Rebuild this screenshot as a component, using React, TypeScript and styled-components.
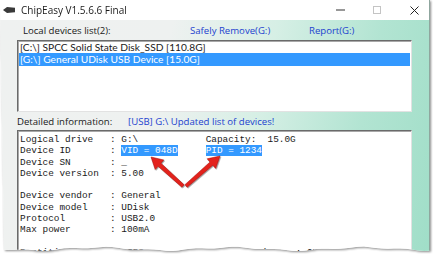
import React from "react";
import styled, { createGlobalStyle } from "styled-components";

const uiFont = `"Open Sans", "Noto Sans", sans-serif`;
const listFont = `Lato, "Liberation Sans", sans-serif`;
const monoFont = `"Liberation Mono", "Courier New", monospace`;

const GlobalStyle = createGlobalStyle`
  html, body {
    margin: 0;
    padding: 0;
    background: #ffffff;
  }
  body {
    width: 434px;
    height: 257px;
    overflow: hidden;
  }
`;

// torn paper bottom edge of the screenshot
const tornEdge = (() => {
  const pts: string[] = ["0 0", "100% 0"];
  for (let x = 430; x >= 0; x -= 6) {
    const y = 248.8 + Math.sin(x / 21) * 1.5 + Math.sin(x / 6.7 + 1) * 0.7;
    pts.push(`${x}px ${y.toFixed(1)}px`);
  }
  return `polygon(${pts.join(", ")})`;
})();

const Page = styled.div`
  position: relative;
  width: 434px;
  height: 257px;
  overflow: hidden;
  background: #ffffff;
`;

const Shadow = styled.div`
  width: 431px;
  filter: drop-shadow(1px 1.5px 1.2px rgba(0, 0, 0, 0.45));
`;

const Window = styled.div`
  width: 430px;
  height: 256px;
  box-sizing: border-box;
  display: flex;
  flex-direction: column;
  border-right: 1px solid #8fa69e;
  clip-path: ${tornEdge};
  background: #ffffff;
`;

const TitleBar = styled.div`
  height: 20px;
  flex: none;
  display: flex;
  align-items: center;
  padding-left: 3px;
  background: #ffffff;
`;

const Title = styled.span`
  margin-left: 6px;
  font-family: ${uiFont};
  font-size: 10px;
  color: #1a1a1a;
`;

const Controls = styled.div`
  margin-left: auto;
  display: flex;
  height: 20px;
`;

const Control = styled.div<{ $w: number }>`
  width: ${(p) => p.$w}px;
  display: flex;
  align-items: center;
  justify-content: center;
`;

const Client = styled.div`
  flex: 1;
  display: flex;
  flex-direction: column;
  padding: 0 17px;
  background: linear-gradient(
    102deg,
    #eff1f0 0%,
    #eef1f0 36%,
    #d6efe5 58%,
    #b2e4d2 80%,
    #a0dec8 100%
  );
`;

const HeaderRow = styled.div<{ $h: number; $cols: string }>`
  height: ${(p) => p.$h}px;
  flex: none;
  display: grid;
  grid-template-columns: ${(p) => p.$cols};
  align-items: center;
  font-family: ${uiFont};
  font-size: 9.6px;
  white-space: nowrap;
`;

const Label = styled.span<{ $indent?: number }>`
  padding-left: ${(p) => p.$indent ?? 0}px;
  color: #1a1a1a;
`;

const LinkText = styled.span`
  color: #1d3fcf;
`;

const Box = styled.div`
  box-sizing: border-box;
  background: #ffffff;
  border-top: 1px solid #6a6a6a;
  border-left: 1px solid #6a6a6a;
  border-right: 1px solid #e2e2e2;
  border-bottom: 1px solid #e2e2e2;
  box-shadow: inset 1px 1px 0 #a8a8a8;
`;

const ListBox = styled(Box)`
  height: 72px;
  flex: none;
  padding: 0 1px 0 1px;
`;

const ListRow = styled.div<{ $selected?: boolean }>`
  height: 12.3px;
  line-height: 12.3px;
  padding-left: 1px;
  font-family: ${listFont};
  font-size: 10.2px;
  white-space: nowrap;
  overflow: hidden;
  color: ${(p) => (p.$selected ? "#ffffff" : "#1a1a1a")};
  background: ${(p) => (p.$selected ? "#3399ff" : "transparent")};
`;

const DetailBox = styled(Box)`
  flex: 1;
  padding: 3px 0 0 2px;
  font-family: ${monoFont};
  font-size: 9.4px;
  line-height: 11.3px;
  color: #1a1a1a;
  white-space: pre;
`;

const Line = styled.div`
  height: 11.3px;
`;

const Mark = styled.span`
  background: #3399ff;
  color: #ffffff;
`;

const Arrows = styled.svg`
  position: absolute;
  left: 0;
  top: 0;
  pointer-events: none;
`;

const arrowPoints = (x1: number, y1: number, x2: number, y2: number) => {
  const shaft = 2.1;
  const headW = 6.4;
  const headL = 11.5;
  const dx = x2 - x1;
  const dy = y2 - y1;
  const len = Math.hypot(dx, dy);
  const ux = dx / len;
  const uy = dy / len;
  const px = -uy;
  const py = ux;
  const bx = x2 - ux * headL;
  const by = y2 - uy * headL;
  const p = (x: number, y: number) => `${x.toFixed(1)},${y.toFixed(1)}`;
  return [
    p(x1 + px * shaft * 0.8, y1 + py * shaft * 0.8),
    p(bx + px * shaft, by + py * shaft),
    p(bx + px * headW, by + py * headW),
    p(x2, y2),
    p(bx - px * headW, by - py * headW),
    p(bx - px * shaft, by - py * shaft),
    p(x1 - px * shaft * 0.8, y1 - py * shaft * 0.8),
  ].join(" ");
};

const AppIcon = () => (
  <svg width="12" height="8" viewBox="0 0 12 8">
    <path d="M0 4 L4 1 L12 1.8 L12 6.2 L4 7 Z" fill="#3a3a3a" />
  </svg>
);

const details: React.ReactNode[] = [
  <>{"Logical drive   : G:\\            Capacity:  15.0G"}</>,
  <>
    {"Device ID       : "}
    <Mark>VID = 048D</Mark>
    {"     "}
    <Mark>PID = 1234</Mark>
  </>,
  <>{"Device SN       : _"}</>,
  <>{"Device version  : 5.00"}</>,
  <>{""}</>,
  <>{"Device vendor   : General"}</>,
  <>{"Device model    : UDisk"}</>,
  <>{"Protocol        : USB2.0"}</>,
  <>{"Max power       : 100mA"}</>,
  <>{""}</>,
  <>{"Partition type  : NTFS           Device active   : OK"}</>,
];

export default function App() {
  return (
    <Page>
      <GlobalStyle />
      <Shadow>
        <Window>
          <TitleBar>
            <AppIcon />
            <Title>ChipEasy V1.5.6.6 Final</Title>
            <Controls>
              <Control $w={28}>
                <svg width="9" height="2" viewBox="0 0 9 2">
                  <rect width="9" height="1" y="0.5" fill="#333" />
                </svg>
              </Control>
              <Control $w={45}>
                <svg width="8" height="8" viewBox="0 0 8 8">
                  <rect x="0.5" y="0.5" width="7" height="7" fill="none" stroke="#c4c4c4" />
                </svg>
              </Control>
              <Control $w={30}>
                <svg width="9" height="9" viewBox="0 0 9 9">
                  <path d="M0.5 0.5 L8.5 8.5 M8.5 0.5 L0.5 8.5" stroke="#222" strokeWidth="1" />
                </svg>
              </Control>
            </Controls>
          </TitleBar>
          <Client>
            <HeaderRow $h={20} $cols="173px 119px auto">
              <Label $indent={6}>Local devices list(2):</Label>
              <LinkText>Safely Remove(G:)</LinkText>
              <LinkText>Report(G:)</LinkText>
            </HeaderRow>
            <ListBox>
              <ListRow>[C:\] SPCC Solid State Disk_SSD [110.8G]</ListRow>
              <ListRow $selected>[G:\] General UDisk USB Device [15.0G]</ListRow>
            </ListBox>
            <HeaderRow $h={18} $cols="111px auto">
              <Label>Detailed information:</Label>
              <LinkText>[USB] G:\ Updated list of devices!</LinkText>
            </HeaderRow>
            <DetailBox>
              {details.map((d, i) => (
                <Line key={i}>{d}</Line>
              ))}
            </DetailBox>
          </Client>
        </Window>
      </Shadow>
      <Arrows width="434" height="257" viewBox="0 0 434 257">
        <defs>
          <filter id="arrowShadow" x="-20%" y="-20%" width="140%" height="140%">
            <feDropShadow dx="0.8" dy="0.8" stdDeviation="0.6" floodColor="#000" floodOpacity="0.45" />
          </filter>
        </defs>
        <g filter="url(#arrowShadow)" fill="#e3221c" stroke="#a5100c" strokeWidth="0.5">
          <polygon points={arrowPoints(183, 186, 151, 157)} />
          <polygon points={arrowPoints(186, 186, 220, 156)} />
        </g>
      </Arrows>
    </Page>
  );
}
